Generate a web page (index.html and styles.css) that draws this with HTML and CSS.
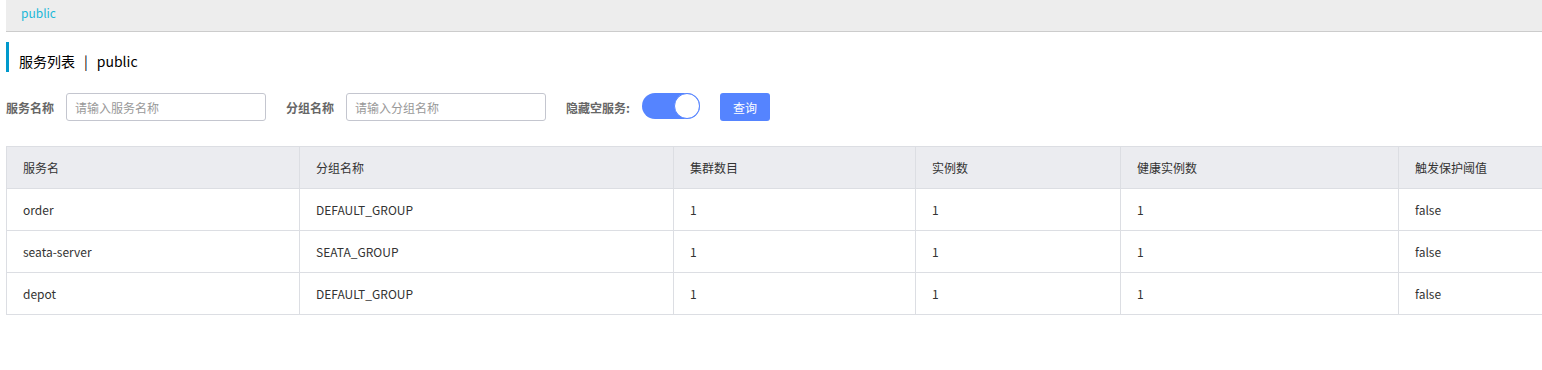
FILE: index.html
```html
<!DOCTYPE html>
<html lang="zh-CN">

<head>
    <meta charset="UTF-8">
    <meta name="viewport" content="width=device-width, initial-scale=1.0">
    <title>服务列表</title>
    <link rel="stylesheet" href="styles.css">
</head>

<body>
    <div class="page">
        <div class="namespace-bar">
            <span class="namespace-link">public</span>
        </div>

        <h2 class="page-title">服务列表<span class="title-sep">|</span>public</h2>

        <div class="search-form">
            <label class="form-label">服务名称</label>
            <input class="form-input" type="text" placeholder="请输入服务名称">

            <label class="form-label">分组名称</label>
            <input class="form-input" type="text" placeholder="请输入分组名称">

            <label class="form-label">隐藏空服务:</label>
            <span class="switch switch-on"><span class="switch-knob"></span></span>

            <button class="query-btn">查询</button>
        </div>

        <div class="table-wrap">
            <table class="service-table">
                <colgroup>
                    <col style="width: 293px">
                    <col style="width: 374px">
                    <col style="width: 242px">
                    <col style="width: 205px">
                    <col style="width: 278px">
                    <col style="width: 200px">
                </colgroup>
                <thead>
                    <tr>
                        <th>服务名</th>
                        <th>分组名称</th>
                        <th>集群数目</th>
                        <th>实例数</th>
                        <th>健康实例数</th>
                        <th>触发保护阈值</th>
                    </tr>
                </thead>
                <tbody>
                    <tr>
                        <td>order</td>
                        <td>DEFAULT_GROUP</td>
                        <td>1</td>
                        <td>1</td>
                        <td>1</td>
                        <td>false</td>
                    </tr>
                    <tr>
                        <td>seata-server</td>
                        <td>SEATA_GROUP</td>
                        <td>1</td>
                        <td>1</td>
                        <td>1</td>
                        <td>false</td>
                    </tr>
                    <tr>
                        <td>depot</td>
                        <td>DEFAULT_GROUP</td>
                        <td>1</td>
                        <td>1</td>
                        <td>1</td>
                        <td>false</td>
                    </tr>
                </tbody>
            </table>
        </div>
    </div>
</body>

</html>
```

FILE: styles.css
```css
body {
    font-family: "Noto Sans CJK SC", "Liberation Sans", sans-serif;
    font-size: 12px;
    color: #333;
    background-color: #fff;
    margin: 0;
    padding: 0;
    overflow: hidden;
}

.page {
    padding-left: 6px;
}

.namespace-bar {
    height: 32px;
    background-color: #ededed;
    border-bottom: 1px solid #ccc;
    padding-left: 15px;
    box-sizing: border-box;
}

.namespace-link {
    color: #1cb8d8;
    font-size: 12px;
    line-height: 26px;
}

.page-title {
    margin: 10px 0 0;
    height: 30px;
    border-left: 3px solid #09c;
    padding: 6px 0 0 10px;
    box-sizing: border-box;
    font-size: 14px;
    font-weight: normal;
    line-height: 26px;
    color: #000;
}

.title-sep {
    margin: 0 9px;
}

.search-form {
    display: flex;
    align-items: center;
    margin-top: 21px;
    height: 28px;
}

.form-label {
    font-weight: bold;
    color: #666;
    margin-right: 12px;
}

.form-input {
    width: 200px;
    height: 28px;
    box-sizing: border-box;
    border: 1px solid #c4c6cf;
    border-radius: 3px;
    padding: 0 8px;
    margin-right: 20px;
    font-family: inherit;
    font-size: 12px;
    outline: none;
}

.form-input::placeholder {
    color: #999;
}

.switch {
    position: relative;
    display: inline-block;
    width: 58px;
    height: 26px;
    border-radius: 13px;
    background-color: #5584ff;
    margin: 0 20px 2px 0;
}

.switch-knob {
    position: absolute;
    top: 0;
    right: 0;
    width: 26px;
    height: 26px;
    box-sizing: border-box;
    border-radius: 50%;
    background-color: #fff;
    border: 1px solid #5584ff;
}

.query-btn {
    width: 50px;
    height: 28px;
    border: none;
    border-radius: 3px;
    background-color: #5584ff;
    color: #fff;
    font-family: inherit;
    font-size: 12px;
    cursor: pointer;
}

.table-wrap {
    margin-top: 25px;
    overflow: hidden;
}

.service-table {
    table-layout: fixed;
    border-collapse: collapse;
    width: 1592px;
}

.service-table th,
.service-table td {
    height: 42px;
    padding: 0 16px;
    border: 1px solid #dcdee3;
    text-align: left;
    font-weight: normal;
    color: #333;
    box-sizing: border-box;
}

.service-table th {
    background-color: #ebecf0;
}
```
